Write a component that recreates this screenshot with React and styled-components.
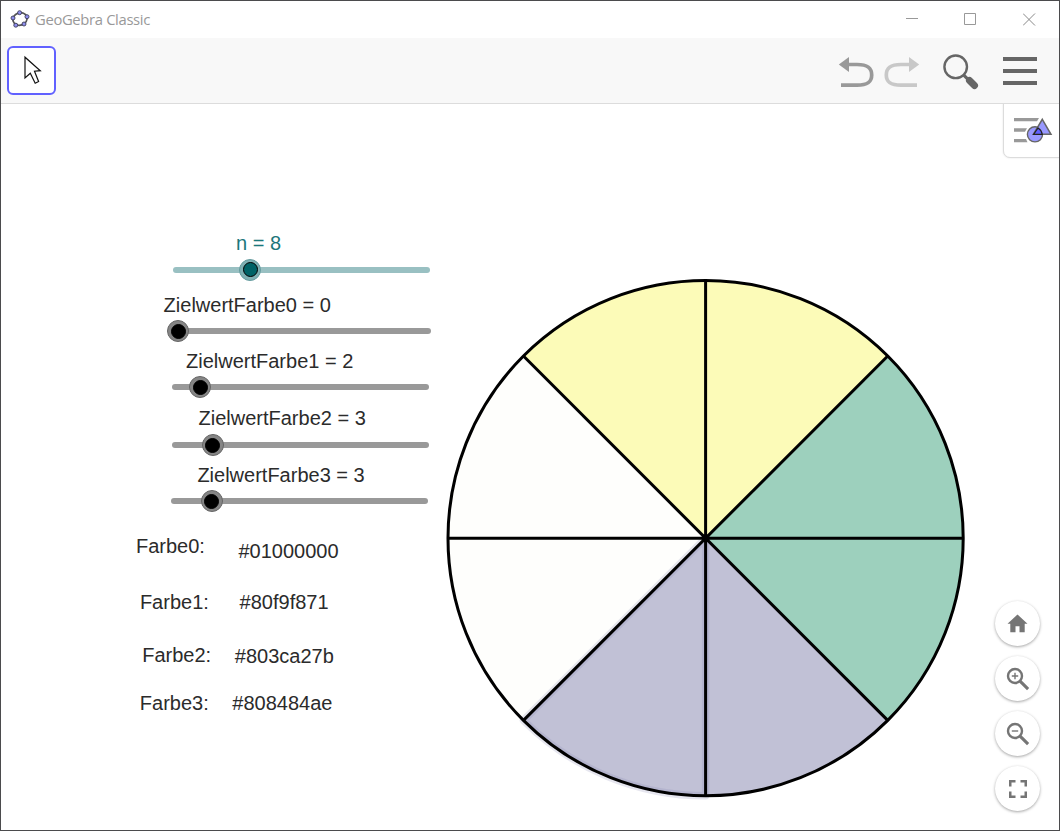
import React from "react";
import styled, { createGlobalStyle } from "styled-components";

const GlobalStyle = createGlobalStyle`
  *, *::before, *::after { box-sizing: border-box; }
  body { margin: 0; background: #fff; }
`;

const Window = styled.div`
  width: 1060px;
  height: 831px;
  display: flex;
  flex-direction: column;
  border: 1px solid #4b4b4d;
  background: #fff;
  font-family: "Liberation Sans", Arial, sans-serif;
  overflow: hidden;
`;

const TitleBar = styled.header`
  flex: none;
  height: 37px;
  display: flex;
  align-items: center;
  padding-left: 9px;
`;

const Title = styled.span`
  flex: 1;
  margin: 0 0 2px 5px;
  font: 400 14.8px/20px "Open Sans", "Noto Sans", sans-serif;
  letter-spacing: -0.34px;
  color: #999;
`;

const WindowButton = styled.button`
  width: ${(p) => p.$width}px;
  height: 37px;
  padding: 0;
  border: 0;
  background: none;
  display: flex;
  align-items: center;
  justify-content: center;
`;

const Toolbar = styled.nav`
  flex: none;
  height: 66px;
  display: flex;
  align-items: center;
  background: #f8f8f8;
  border-bottom: 1px solid #dcdcdc;
  padding: 0 16px 0 6px;
`;

const ToolButton = styled.button`
  width: 49px;
  height: 49px;
  padding: 0;
  border: 2px solid #6161ff;
  border-radius: 6px;
  background: #fff;
  display: flex;
`;

const Actions = styled.div`
  margin-left: auto;
  padding-top: 3px;
  display: flex;
  align-items: center;
`;

const ActionButton = styled.button`
  width: ${(p) => p.$width}px;
  height: 46px;
  margin-left: ${(p) => p.$gap || 0}px;
  padding: 0;
  border: 0;
  background: none;
  display: flex;
  color: ${(p) => p.$color || "#666"};
`;

const Canvas = styled.main`
  position: relative;
  flex: 1;
  overflow: hidden;
`;

const Drawing = styled.svg`
  position: absolute;
  left: ${(p) => p.$x}px;
  top: ${(p) => p.$y}px;
  display: block;
`;

const CanvasText = styled.span`
  position: absolute;
  left: ${(p) => p.$x}px;
  top: ${(p) => p.$y}px;
  font-size: 20px;
  line-height: 24px;
  white-space: pre;
  color: ${(p) => p.$color || "#2b2b2b"};
`;

const Track = styled.div`
  position: absolute;
  left: ${(p) => p.$x}px;
  top: ${(p) => p.$y}px;
  width: 257px;
  height: 6px;
  border-radius: 3px;
  background: ${(p) => (p.$teal ? "#99c0c2" : "#999")};
`;

const Knob = styled.div`
  position: absolute;
  left: ${(p) => p.$offset - 11}px;
  top: -8px;
  width: 22px;
  height: 22px;
  padding: 3.5px;
  border-radius: 50%;
  border: 1px solid ${(p) => (p.$teal ? "#669c9f" : "#666")};
  background: ${(p) => (p.$teal ? "#7fb0b3" : "#858585")};
  &::after {
    content: "";
    display: block;
    width: 15px;
    height: 15px;
    margin: -1px;
    border-radius: 50%;
    border: 1.5px solid #000;
    background: ${(p) => (p.$teal ? "#006266" : "#000")};
  }
`;

const StyleTab = styled.button`
  position: absolute;
  top: -1px;
  right: -1px;
  width: 57px;
  height: 55px;
  padding: 0;
  border: 1px solid #dcdcdc;
  border-bottom-width: 1.5px;
  border-radius: 0 0 0 7px;
  background: #fff;
  box-shadow: 0 0 2px rgba(0, 0, 0, 0.12);
  display: flex;
`;

const ZoomPanel = styled.div`
  position: absolute;
  right: 19px;
  bottom: 19px;
  display: flex;
  flex-direction: column;
  gap: 10px;
`;

const RoundButton = styled.button`
  width: 45px;
  height: 45px;
  padding: 0;
  border: 0;
  border-radius: 50%;
  background: #fff;
  color: #757575;
  box-shadow: 0 1px 3px rgba(0, 0, 0, 0.36);
  display: flex;
  align-items: center;
  justify-content: center;
`;

const sliders = [
  { label: "n = 8", labelX: 235, base: 250, x: 172.4, y: 269.5, knob: 77, teal: true },
  { label: "ZielwertFarbe0 = 0", labelX: 162.6, base: 312, x: 173.4, y: 331, knob: 4 },
  { label: "ZielwertFarbe1 = 2", labelX: 185, base: 368, x: 171.3, y: 387.3, knob: 28.2 },
  { label: "ZielwertFarbe2 = 3", labelX: 197.5, base: 425, x: 171.3, y: 445, knob: 40.7 },
  { label: "ZielwertFarbe3 = 3", labelX: 196.4, base: 482, x: 170.3, y: 501.4, knob: 40.3 },
];

const texts = [
  ["Farbe0:", 135, 553],
  ["#01000000", 237.4, 558],
  ["Farbe1:", 138.9, 609],
  ["#80f9f871", 238.6, 609],
  ["Farbe2:", 141.2, 662],
  ["#803ca27b", 233.8, 663],
  ["Farbe3:", 138.8, 710],
  ["#808484ae", 231.3, 710],
];

const CANVAS_TOP = 104;

const R = 257.6;
const C = 265;

function point(index) {
  const a = (index * Math.PI) / 4;
  return [C + R * Math.cos(a), C - R * Math.sin(a)];
}

function sector(from, to) {
  const [x1, y1] = point(from);
  const [x2, y2] = point(to);
  return `M${C} ${C}L${x1} ${y1}A${R} ${R} 0 0 0 ${x2} ${y2}Z`;
}

function Wheel() {
  return (
    <Drawing $x={439} $y={169} width="530" height="530" viewBox="-0.6 -0.2 530 530">
      <path d={sector(3, 5)} fill="#fefefc" />
      <path d={sector(1, 3)} fill="#fcfbb8" />
      <path d={sector(-1, 1)} fill="#9dd0bd" />
      <path d={sector(5, 7)} fill="#c1c1d6" />
      <path d={sector(5, 6)} fill="none" stroke="#8484ae" strokeOpacity="0.2" strokeWidth="7.5" strokeLinejoin="round" />
      <g fill="none" stroke="#000" strokeWidth="3">
        <circle cx={C} cy={C} r={R} />
        {[0, 1, 2, 3].map((i) => {
          const [x1, y1] = point(i);
          const [x2, y2] = point(i + 4);
          return <path key={i} d={`M${x1} ${y1}L${x2} ${y2}`} />;
        })}
      </g>
      <circle cx={C} cy={C} r="4" />
    </Drawing>
  );
}

function Logo() {
  const nodes = [[9.6, 3.2], [17, 7.2], [14, 14.5], [5.8, 15.7], [3, 8.5]];
  return (
    <svg width="20" height="20" viewBox="0 0.5 20 20">
      <ellipse cx="10" cy="9.5" rx="7.2" ry="6.2" transform="rotate(-18 10 9.5)" fill="none" stroke="#555" strokeWidth="1.7" />
      {nodes.map(([x, y]) => (
        <circle key={x} cx={x} cy={y} r="2" fill="#8f8fee" stroke="#3c3c58" strokeWidth="0.9" />
      ))}
    </svg>
  );
}

function UndoIcon({ flip }) {
  return (
    <svg width="38" height="46" viewBox="0 0 38 46">
      <g transform={flip ? "translate(38 0) scale(-1 1)" : undefined}>
        <path d="M.8 15.5 11 8v15z" fill="currentColor" />
        <path d="M10 15.5H19C29.5 15.5 33.7 18.8 33.7 26S29.5 36.2 19 36.2H3" fill="none" stroke="currentColor" strokeWidth="3.7" />
      </g>
    </svg>
  );
}

function SearchIcon() {
  return (
    <svg width="38" height="46" viewBox="0 0 38 46" fill="none" stroke="currentColor">
      <circle cx="13.7" cy="17.8" r="11.3" strokeWidth="2.4" />
      <path d="M21.5 25.8 26 30.3" strokeWidth="3.2" />
      <path d="M27.5 31.5 32.5 36.5" strokeWidth="7" strokeLinecap="round" />
    </svg>
  );
}

function StyleIcon() {
  return (
    <svg width="55" height="53" viewBox="1004 104 55 53">
      <path d="M1014 118H1039L1037 121.2H1014zM1014 128.3H1027L1025 131.8H1014zM1014 139H1026L1027.5 142.2H1014z" fill="#999" />
      <circle cx="1035" cy="134.3" r="7.6" fill="#9999ff" stroke="#666" strokeWidth="1.4" />
      <path d="M1042.3 119.3 1051 134.3H1033.4z" fill="#9999ff" stroke="#666" strokeWidth="1.5" />
      <path d="M1038 128Q1041.6 130.2 1042.3 134.3H1033.6z" fill="#6161ff" stroke="#222" strokeWidth="1.2" />
    </svg>
  );
}

export default function App() {
  return (
    <>
      <GlobalStyle />
      <Window>
        <TitleBar>
          <Logo />
          <Title>GeoGebra Classic</Title>
          <WindowButton $width={58} aria-label="Minimize">
            <svg width="13" height="13"><path d="M0 5.5H12" stroke="#999" /></svg>
          </WindowButton>
          <WindowButton $width={58} aria-label="Maximize">
            <svg width="13" height="13"><path d="M.5 .5H11.5V11.5H.5z" fill="none" stroke="#999" /></svg>
          </WindowButton>
          <WindowButton $width={60} aria-label="Close">
            <svg width="13" height="13"><path d="M0 .5 12 12.5M12 .5 0 12.5" stroke="#888" /></svg>
          </WindowButton>
        </TitleBar>
        <Toolbar>
          <ToolButton aria-label="Move">
            <svg width="45" height="45" viewBox="9 48 45 45">
              <path d="M25 57.2V78L30.3 73.3 35.2 83.2 38.6 81.5 34.5 71.2 40.3 70.7z" fill="#fff" stroke="#111" strokeWidth="1.2" />
            </svg>
          </ToolButton>
          <Actions>
            <ActionButton $width={38} $color="#999" aria-label="Undo"><UndoIcon /></ActionButton>
            <ActionButton $width={38} $gap={6} $color="#c8c8c8" aria-label="Redo"><UndoIcon flip /></ActionButton>
            <ActionButton $width={38} $gap={22} aria-label="Search"><SearchIcon /></ActionButton>
            <ActionButton $width={40} $gap={23} aria-label="Menu">
              <svg width="40" height="46"><path d="M0 10H34M0 22H34M0 34H34" stroke="currentColor" strokeWidth="4" /></svg>
            </ActionButton>
          </Actions>
        </Toolbar>
        <Canvas>
          {sliders.map((s) => (
            <React.Fragment key={s.label}>
              <CanvasText $x={s.labelX} $y={s.base - 19 - CANVAS_TOP} $color={s.teal ? "#1c777b" : undefined}>
                {s.label}
              </CanvasText>
              <Track $x={s.x} $y={s.y - 3 - CANVAS_TOP} $teal={s.teal}>
                <Knob $offset={s.knob} $teal={s.teal} />
              </Track>
            </React.Fragment>
          ))}
          {texts.map(([text, x, base]) => (
            <CanvasText key={text} $x={x} $y={base - 19 - CANVAS_TOP}>{text}</CanvasText>
          ))}
          <Wheel />
          <StyleTab aria-label="Style"><StyleIcon /></StyleTab>
          <ZoomPanel>
            <RoundButton aria-label="Home">
              <svg width="24" height="24" viewBox="0.5 0.5 24 24" fill="currentColor"><path d="M10 20.8v-6h4v6h5.2v-8.6H22L12 3 2 12.2h2.8v8.6z" /></svg>
            </RoundButton>
            <RoundButton aria-label="Zoom in">
              <svg width="24" height="24" viewBox="0.2 0.2 24 24" fill="none" stroke="currentColor">
                <circle cx="9.2" cy="9.2" r="7" strokeWidth="2.4" />
                <path d="M14 14 22.3 22.3" strokeWidth="3.1" />
                <path d="M6 9.2H12.4M9.2 6V12.4" strokeWidth="1.4" />
              </svg>
            </RoundButton>
            <RoundButton aria-label="Zoom out">
              <svg width="24" height="24" viewBox="0.2 0.2 24 24" fill="none" stroke="currentColor">
                <circle cx="9.2" cy="9.2" r="7" strokeWidth="2.4" />
                <path d="M14 14 22.3 22.3" strokeWidth="3.1" />
                <path d="M6 9.2H12.4" strokeWidth="1.4" />
              </svg>
            </RoundButton>
            <RoundButton aria-label="Fullscreen">
              <svg width="18" height="18" viewBox="0 0 18 18" fill="none" stroke="currentColor" strokeWidth="2.5">
                <path d="M1.25 6.5V1.25H6.5M11.5 1.25H16.75V6.5M16.75 11.5V16.75H11.5M6.5 16.75H1.25V11.5" />
              </svg>
            </RoundButton>
          </ZoomPanel>
        </Canvas>
      </Window>
    </>
  );
}
